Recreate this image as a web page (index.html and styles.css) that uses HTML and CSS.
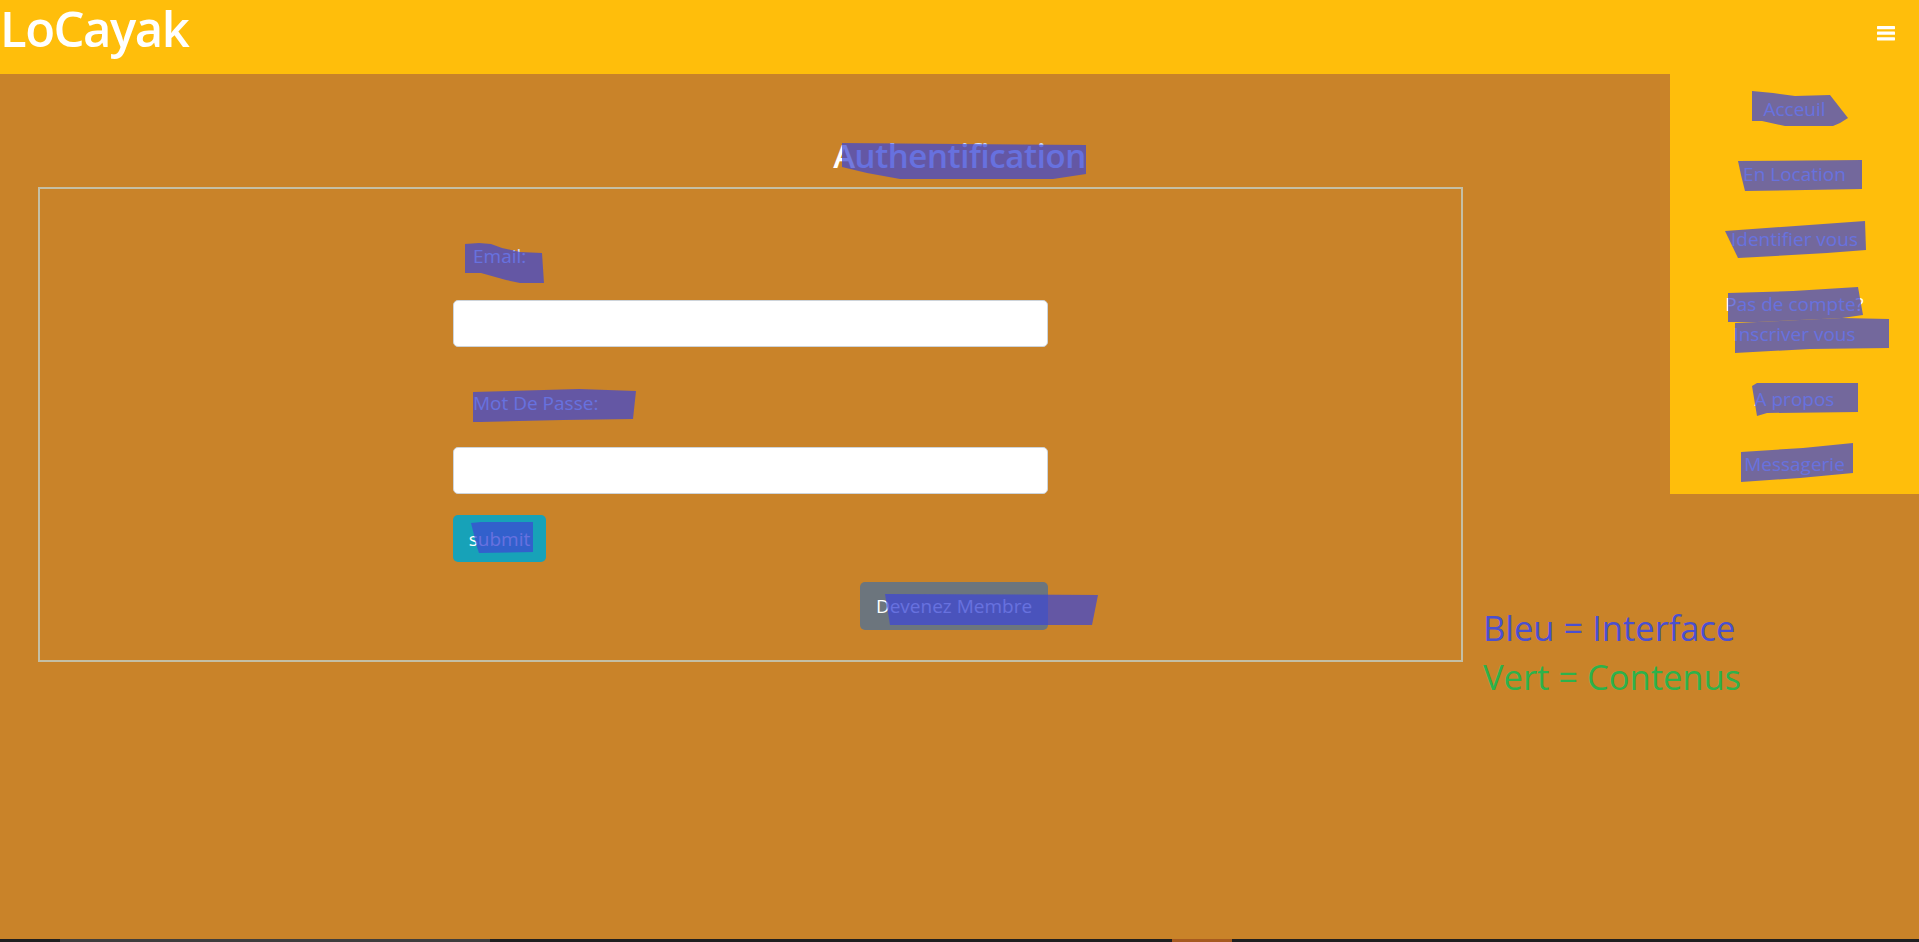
FILE: index.html
```html
<!DOCTYPE html>
<html lang="fr">
<head>
<meta charset="utf-8">
<title>LoCayak</title>
<link rel="stylesheet" href="styles.css">
</head>
<body>
<div class="page">
  <header class="topbar">
    <a class="brand">LoCayak</a>
    <button class="burger" aria-label="Menu">
      <svg width="18" height="15" viewBox="0 0 18 15"><rect x="0" y="0" width="18" height="3.2" rx="0.6" fill="#fff"/><rect x="0" y="5.6" width="18" height="3.2" rx="0.6" fill="#fff"/><rect x="0" y="11.2" width="18" height="3.2" rx="0.6" fill="#fff"/></svg>
    </button>
  </header>

  <nav class="menu">
    <div class="menu-item"><a class="hl">Acceuil</a></div>
    <div class="menu-item"><a class="hl">En Location</a></div>
    <div class="menu-item"><a class="hl">Identifier vous</a></div>
    <div class="menu-item"><span>P<span class="hl">as de compte</span>?</span><br><a class="hl">Inscriver vous</a></div>
    <div class="menu-item"><a class="hl">A propos</a></div>
    <div class="menu-item"><a class="hl">Messagerie</a></div>
  </nav>

  <main class="content">
    <h3 class="title">A<span class="hl">uthentification</span></h3>
    <div class="row">
      <section class="auth-box">
        <form class="auth-form">
          <label class="field-label"><span class="hl">Email:</span></label>
          <input class="field" type="email">
          <label class="field-label field-label-second"><span class="hl">Mot De Passe:</span></label>
          <input class="field" type="password">
          <button class="btn btn-submit" type="button">s<span class="hl">ubmit</span></button>
        </form>
        <a class="btn btn-member">D<span class="hl">evenez Membre</span></a>
      </section>
      <div class="legend">
        <p class="legend-blue">Bleu = Interface</p>
        <p class="legend-green">Vert = Contenus</p>
      </div>
    </div>
  </main>

  <div class="taskbar"><span class="tb-app"></span><span class="tb-active"></span></div>

  <div class="marks">
    <div class="mk mk-auth"></div>
    <div class="mk mk-email"></div>
    <div class="mk mk-pass"></div>
    <div class="mk mk-submit"></div>
    <div class="mk mk-member"></div>
    <div class="mk mk-acceuil"></div>
    <div class="mk mk-location"></div>
    <div class="mk mk-ident"></div>
    <div class="mk mk-pas"></div>
    <div class="mk mk-inscr"></div>
    <div class="mk mk-propos"></div>
    <div class="mk mk-msg"></div>
  </div>
</div>
</body>
</html>
```

FILE: styles.css
```css
* { box-sizing: border-box; }

html, body {
  margin: 0;
  padding: 0;
}

body {
  font-family: "Open Sans", "Noto Sans", sans-serif;
  background: #c98329;
  color: #fff;
  overflow: hidden;
}

.page {
  position: relative;
  width: 1919px;
  height: 942px;
  display: flex;
  flex-direction: column;
}

/* text that sits under a highlighter mark */
.hl { color: #d4def9; }

/* header */
.topbar {
  height: 74px;
  flex: 0 0 74px;
  background: #ffbe0b;
  display: flex;
  justify-content: space-between;
  align-items: flex-start;
}

.brand {
  font-size: 49px;
  line-height: 56px;
  font-weight: 600;
  letter-spacing: -1.5px;
  color: #fff;
}

.burger {
  margin: 26px 24px 0 0;
  padding: 0;
  border: 0;
  background: none;
  width: 18px;
  height: 15px;
  display: block;
}
.burger svg { display: block; }

/* dropdown menu */
.menu {
  position: absolute;
  top: 74px;
  right: 0;
  width: 249px;
  height: 420px;
  background: #ffbe0b;
  z-index: 2;
}

.menu-item {
  padding: 20px 0 15px;
  text-align: center;
  font-size: 19px;
  line-height: 30px;
  color: #fff;
}

/* main */
.content {
  flex: 1;
  padding-top: 62px;
}

.title {
  margin: 0;
  text-align: center;
  font-size: 33px;
  line-height: 40px;
  font-weight: 600;
  letter-spacing: -0.4px;
  color: #fff;
}

.row {
  display: flex;
  align-items: flex-start;
  margin-top: 11px;
  padding-left: 38px;
}

.auth-box {
  width: 1425px;
  height: 475px;
  border: 2px solid #c4bfa5;
  padding: 52px 0 0 413px;
}

.auth-form {
  width: 595px;
  margin: 0;
}

.field-label {
  display: block;
  padding-left: 20px;
  font-size: 19px;
  line-height: 30px;
  color: #fff;
  margin-bottom: 29px;
}

.field-label-second { margin-top: 41px; }

.field {
  display: block;
  width: 595px;
  height: 47px;
  border: 1px solid #ced4da;
  border-radius: 5px;
  background: #fff;
  margin: 0;
}

.btn {
  display: inline-flex;
  align-items: center;
  justify-content: center;
  border: 0;
  border-radius: 5px;
  color: #fff;
  font-family: inherit;
  white-space: nowrap;
}

.btn-submit {
  margin-top: 21px;
  width: 93px;
  height: 47px;
  padding: 0;
  font-size: 19px;
  background: #17a2b8;
}

.btn-member {
  margin: 20px 0 0 407px;
  width: 188px;
  height: 48px;
  font-size: 19px;
  background: #6c757d;
}

.legend {
  margin: 416px 0 0 20px;
}
.legend p {
  margin: 0;
  font-size: 34.5px;
  line-height: 49px;
  white-space: nowrap;
}
.legend-blue { color: #4a4fd0; }
.legend-green { color: #2db24b; }

/* bottom strip */
.taskbar {
  height: 3px;
  flex: 0 0 3px;
  background: #1f1f1f;
  display: flex;
}
.tb-app {
  margin-left: 60px;
  width: 430px;
  background: #3d3d3d;
}
.tb-active {
  margin-left: 682px;
  width: 60px;
  background: #a65a1f;
}

/* annotation marks drawn over the screenshot */
.marks {
  position: absolute;
  inset: 0;
  pointer-events: none;
  z-index: 5;
}
.mk {
  position: absolute;
  background: rgba(61, 71, 212, 0.72);
}

.mk-auth { left: 842px; top: 143px; width: 244px; height: 36px;
  clip-path: polygon(0 0, 244px 2px, 244px 31px, 211px 36px, 58px 36px, 25px 30px, 0 24px); }
.mk-email { left: 465px; top: 243px; width: 79px; height: 40px;
  clip-path: polygon(0 1px, 14px 0, 26px 1px, 37px 5px, 55px 9px, 77px 10px, 79px 40px, 55px 40px, 41px 37px, 16px 30px, 0 30px); }
.mk-pass { left: 473px; top: 389px; width: 163px; height: 33px;
  clip-path: polygon(0 3px, 106px 0, 163px 2px, 160px 30px, 90px 31px, 8px 33px, 0 33px); }
.mk-submit { left: 471px; top: 522px; width: 62px; height: 31px;
  clip-path: polygon(0 1px, 10px 0, 62px 0, 62px 30px, 8px 31px, 6px 25px); }
.mk-member { left: 885px; top: 594px; width: 213px; height: 31px;
  clip-path: polygon(0 0, 213px 1px, 207px 31px, 5px 31px); }
.mk-acceuil { left: 1752px; top: 91px; width: 96px; height: 35px;
  clip-path: polygon(0 0, 21px 2px, 43px 5px, 78px 4px, 96px 27px, 88px 32px, 81px 35px, 33px 35px, 10px 30px, 0 30px); }
.mk-location { left: 1738px; top: 160px; width: 124px; height: 31px;
  clip-path: polygon(0 1px, 124px 0, 124px 29px, 7px 31px, 3px 15px); }
.mk-ident { left: 1725px; top: 221px; width: 141px; height: 37px;
  clip-path: polygon(0 10px, 140px 0, 141px 29px, 102px 32px, 13px 37px); }
.mk-pas { left: 1728px; top: 287px; width: 135px; height: 35px;
  clip-path: polygon(0 6px, 65px 4px, 130px 0, 135px 28px, 114px 31px, 29px 35px, 0 35px); }
.mk-inscr { left: 1735px; top: 318px; width: 154px; height: 35px;
  clip-path: polygon(0 5px, 107px 0, 154px 1px, 154px 30px, 75px 31px, 0 35px); }
.mk-propos { left: 1752px; top: 383px; width: 106px; height: 33px;
  clip-path: polygon(0 3px, 5px 0, 106px 0, 106px 29px, 15px 30px, 5px 33px); }
.mk-msg { left: 1741px; top: 443px; width: 112px; height: 39px;
  clip-path: polygon(0 9px, 62px 5px, 112px 0, 112px 30px, 59px 35px, 0 39px); }
```
